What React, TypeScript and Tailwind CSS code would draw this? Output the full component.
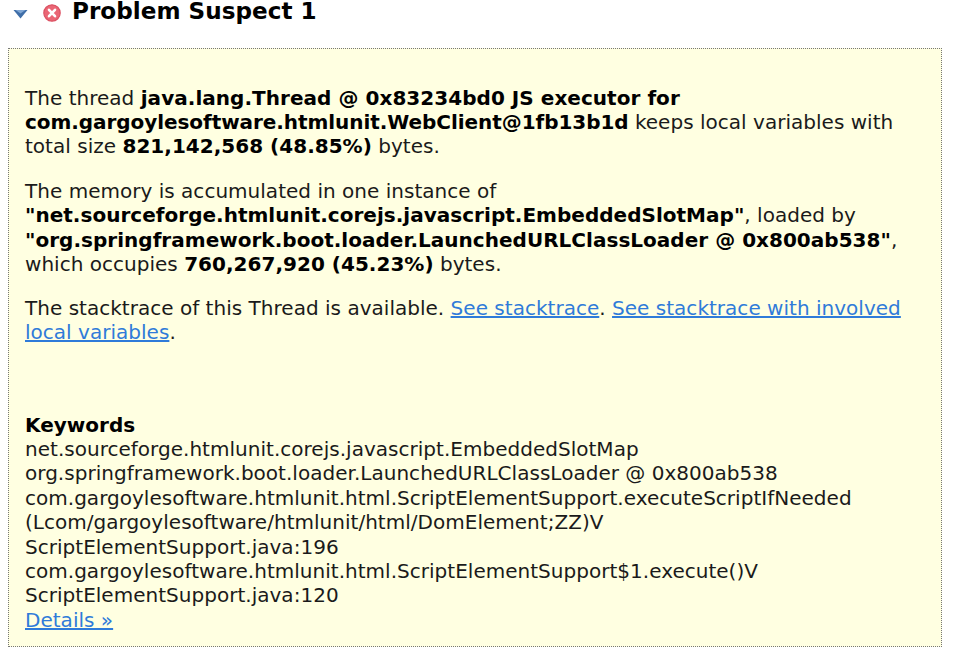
const link = 'text-[#2f7bd9] underline';

function App() {
  return (
    <div className="h-[661px] w-[966px] overflow-hidden bg-white font-['DejaVu_Sans',sans-serif] text-[20px] leading-[24.4px] tracking-[0.02px] text-[#1a1a1a]">
      <div className="flex h-[23px] items-center pl-[13px]">
        <svg width="15" height="10" viewBox="0 0 15 10" className="mt-[5px]">
          <path d="M0.5 1h14L7.5 9.5z" fill="#3f6ea8" />
          <path d="M2.5 1h10L7.5 4.5z" fill="#7fa6d4" />
        </svg>
        <svg width="18" height="18" viewBox="0 0 18 18" className="ml-[15px] mt-[2px]">
          <circle cx="9" cy="9" r="8.2" fill="#ea6675" stroke="#dc5263" strokeWidth="1.2" />
          <path d="M6 5.8l6 6.4M12 5.8l-6 6.4" stroke="#fff" strokeWidth="2.6" strokeLinecap="round" />
        </svg>
        <h2 className="ml-[11px] text-[23.1px] leading-[23px] font-bold text-black">Problem Suspect 1</h2>
      </div>
      <div className="ml-[8px] mt-[25px] h-[599px] w-[934px] border border-dotted border-[#777] bg-[#ffffe1] pl-[16px] pt-[36.6px]">
        <p>
          The thread <b className="tracking-[0.04px] text-black">java.lang.Thread @ 0x83234bd0 JS executor for</b><br />
          <b className="tracking-[-0.06px] text-black">com.gargoylesoftware.htmlunit.WebClient@1fb13b1d</b> keeps local variables with<br />
          total size <b className="text-black">821,142,568 (48.85%)</b> bytes.
        </p>
        <p className="mt-[20px]">
          The memory is accumulated in one instance of<br />
          <b className="text-black">"net.sourceforge.htmlunit.corejs.javascript.EmbeddedSlotMap"</b>, loaded by<br />
          <b className="text-black">"org.springframework.boot.loader.LaunchedURLClassLoader @ 0x800ab538"</b>,<br />
          which occupies <b className="text-black">760,267,920 (45.23%)</b> bytes.
        </p>
        <p className="mt-[19.4px]">
          The stacktrace of this Thread is available. <a className={link}>See stacktrace</a>. <a className={link}>See stacktrace with involved<br />local variables</a>.
        </p>
        <div className="mt-[68px]">
          <b className="text-black">Keywords</b><br />
          net.sourceforge.htmlunit.corejs.javascript.EmbeddedSlotMap<br />
          org.springframework.boot.loader.LaunchedURLClassLoader @ 0x800ab538<br />
          com.gargoylesoftware.htmlunit.html.ScriptElementSupport.executeScriptIfNeeded<br />
          (Lcom/gargoylesoftware/htmlunit/html/DomElement;ZZ)V<br />
          ScriptElementSupport.java:196<br />
          com.gargoylesoftware.htmlunit.html.ScriptElementSupport$1.execute()V<br />
          ScriptElementSupport.java:120<br />
          <a className={link}>Details »</a>
        </div>
      </div>
    </div>
  );
}

export default App;
